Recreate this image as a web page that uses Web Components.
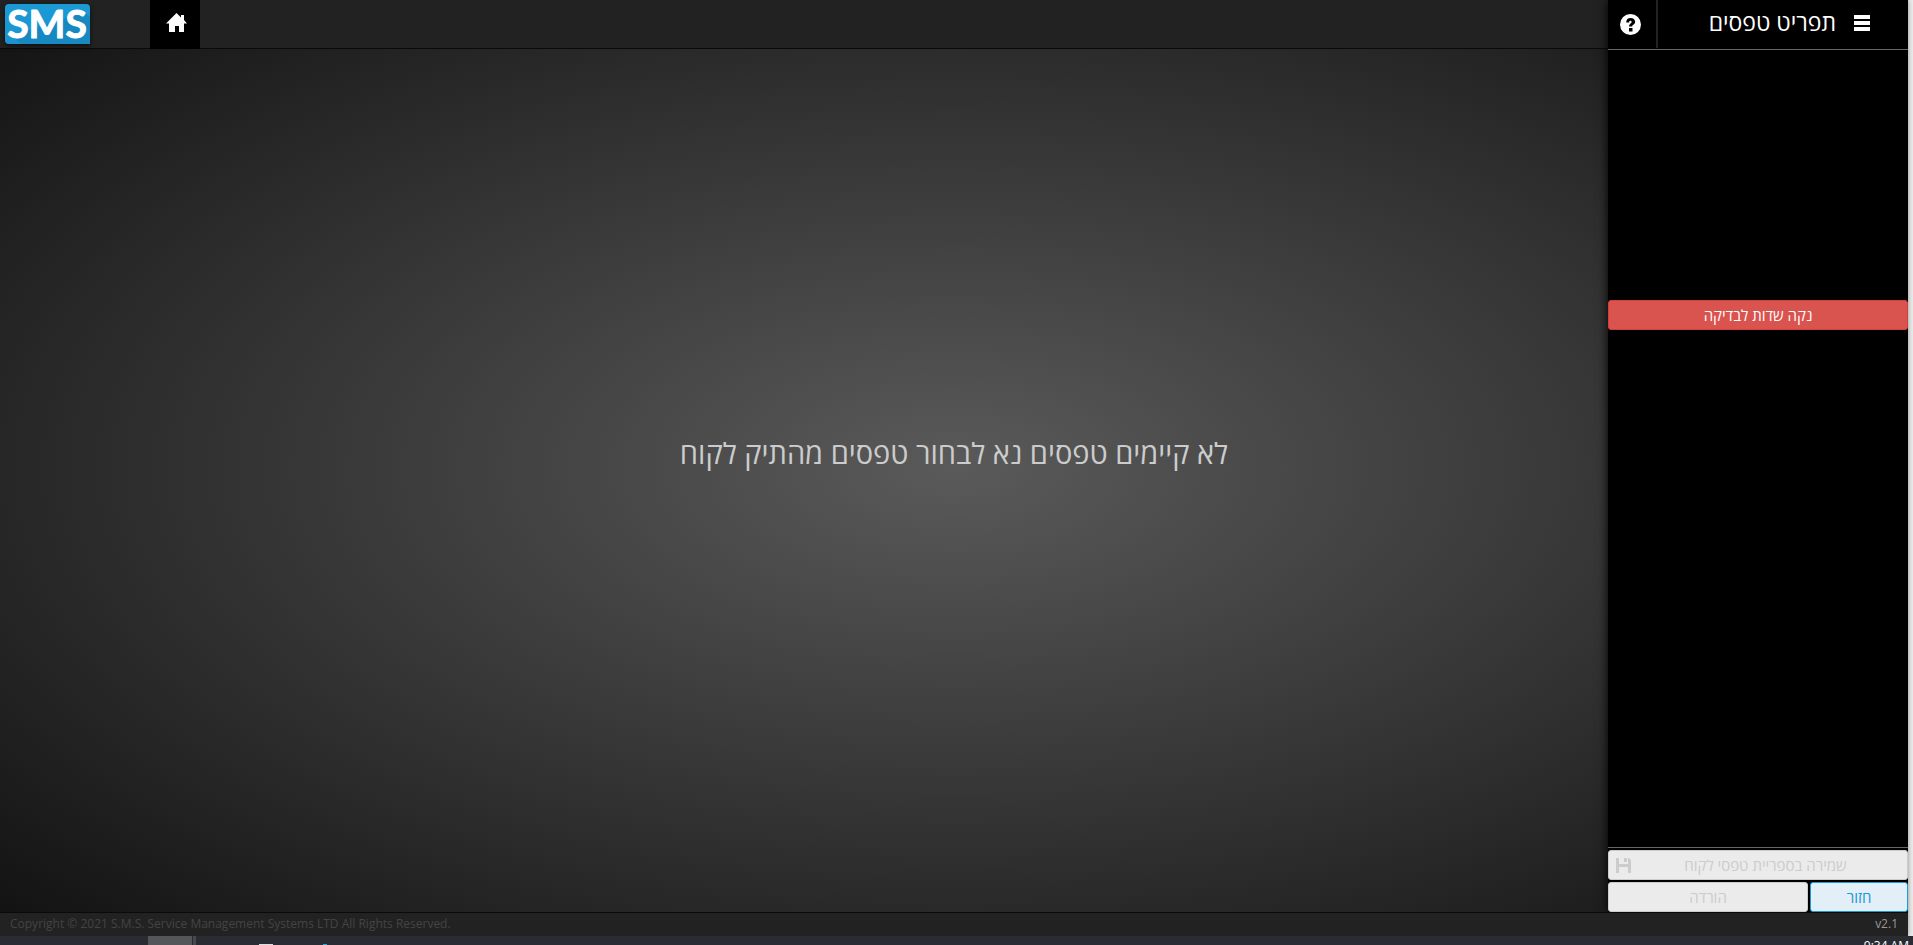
<!DOCTYPE html>
<html lang="he">
<head>
<meta charset="utf-8">
<title>SMS</title>
<style>
html, body { height: 100%; margin: 0; }
body { overflow: hidden; background: #ececec; font-family: "Open Sans", "Noto Sans", sans-serif; }
</style>
</head>
<body>
<sms-app></sms-app>
<script>
const define = (name, html, setup) => customElements.define(name, class extends HTMLElement {
  connectedCallback() {
    if (this.shadowRoot) return;
    const t = document.createElement('template');
    t.innerHTML = html;
    this.attachShadow({ mode: 'open' }).append(t.content.cloneNode(true));
    if (setup) setup(this);
  }
});

const icons = {
  home: '<path d="M10.500 0 0 10.500h3V19h6v-6h4v6h5v-8.500h3L18 7V2h-3v2.500z"/>',
  help: '<path fill-rule="evenodd" d="M10.500 0a10.500 10.500 0 1 0 0 21a10.500 10.500 0 0 0 0-21zM9 14h3.500v3.500H9zM6.200 8.500C6.200 5.400 8 4 10.600 4c2.700 0 4.500 1.400 4.500 3.800 0 2.800-2.900 2.900-2.900 4.700H9.100c0-3 2.500-2.900 2.500-4.500 0-.8-.5-1.200-1.200-1.200-.9 0-1.300.7-1.300 1.700z"/>',
  menu: '<path d="M0 0h16v4H0zM0 6h16v4H0zM0 12h16v4H0z"/>',
  save: '<path fill-rule="evenodd" d="M0 0h3v6h9V0h1l2 2v13h-3V9H3v6H0zM8 0h3v4H8z"/>'
};

define('sms-icon', '<style>:host{display:block;flex:none}svg{display:block;fill:currentColor}</style>', host => {
  const w = host.getAttribute('width'), h = host.getAttribute('height');
  host.shadowRoot.innerHTML += `<svg width="${w}" height="${h}" viewBox="0 0 ${w} ${h}" aria-hidden="true">${icons[host.getAttribute('name')]}</svg>`;
});

define('sms-logo', `
<style>
:host { display: block; width: 85px; height: 40px; box-shadow: 0 2px 5px #0009; border-radius: 4px 4px 0 4px; }
svg { display: block; }
text { font: 700 39px Lato, "Open Sans", sans-serif; fill: #fff; stroke: #fff; stroke-linejoin: round; }
</style>
<svg width="85" height="40" viewBox="0 0 85 40" role="img" aria-label="SMS">
  <defs><linearGradient id="g" x1="0" y1="0" x2="0" y2="1"><stop stop-color="#1b9ad6"/><stop offset="1" stop-color="#1a94ce"/></linearGradient></defs>
  <path d="M4 0H81a4 4 0 0 1 4 4V40H4a4 4 0 0 1-4-4V4a4 4 0 0 1 4-4z" fill="url(#g)"/>
  <path d="M6 32 17 40H85V13L80 8z" fill="#1788c0"/>
  <text x="42" y="34" text-anchor="middle">SMS</text>
</svg>`);

define('sms-topbar', `
<style>
:host { display: flex; height: 48px; background: #222; border-bottom: 1px solid #0a0a0a; }
.brand { box-sizing: border-box; width: 150px; padding: 4px 5px; }
a.home { display: flex; align-items: center; justify-content: center; box-sizing: border-box; width: 50px; height: 49px; padding: 0 0 4px 3px; background: #000; color: #fff; }
</style>
<div class="brand"><sms-logo></sms-logo></div>
<a class="home" href="#" aria-label="Home"><sms-icon name="home" width="21" height="19"></sms-icon></a>`);

define('sms-stage', `
<style>
:host { display: flex; align-items: center; justify-content: center; }
p { margin: 0; font-size: 29px; line-height: 44px; color: #ccc; direction: rtl; }
</style>
<p><slot></slot></p>`);

define('sms-button', `
<style>
:host { display: block; }
button { display: flex; align-items: center; justify-content: center; box-sizing: border-box; width: 100%; height: 30px; margin: 0; padding: 0 7px; border: 1px solid #ccc; border-radius: 3px; background: #ebebeb; color: #ccc; font: 15px/24px "Open Sans", "Noto Sans", sans-serif; direction: rtl; }
span { flex: 1; }
:host([kind=danger]) button { background: #d9534f; border-color: #d43f3a; color: #fff; }
:host([kind=primary]) button { background: #e2eff6; border-color: #1b9ad6; color: #1b9ad6; }
</style>
<button type="button"><span><slot></slot></span><slot name="icon"></slot></button>`,
host => { host.shadowRoot.querySelector('button').disabled = host.hasAttribute('disabled'); });

define('sms-sidebar', `
<style>
:host { display: flex; flex-direction: column; background: #000; color: #fff; box-shadow: 0 0 10px #000; }
header { display: flex; height: 49px; border-bottom: 1px solid #666; }
.help { display: flex; align-items: center; justify-content: center; box-sizing: border-box; width: 50px; height: 48px; padding: 0 3px 0 0; border: 0; border-right: 2px solid #222; background: none; color: #fff; }
.title { flex: 1; display: flex; align-items: center; gap: 18px; direction: rtl; padding: 0 38px 3px 0; }
h1 { margin: 0; padding-bottom: 2px; font-size: 23px; line-height: 32px; font-weight: 400; }
.body { flex: 1; padding-top: 250px; }
footer { display: grid; grid-template-columns: 200px 1fr; gap: 2px; padding: 2px 0 0; border-top: 1px solid #666; }
.wide { grid-column: 1 / -1; }
</style>
<header>
  <button class="help" type="button" aria-label="עזרה"><sms-icon name="help" width="21" height="21"></sms-icon></button>
  <div class="title"><sms-icon name="menu" width="16" height="16"></sms-icon><h1>תפריט טפסים</h1></div>
</header>
<div class="body"><sms-button kind="danger">נקה שדות לבדיקה</sms-button></div>
<footer>
  <sms-button class="wide" disabled>שמירה בספריית טפסי לקוח<sms-icon slot="icon" name="save" width="15" height="15"></sms-icon></sms-button>
  <sms-button disabled>הורדה</sms-button>
  <sms-button kind="primary">חזור</sms-button>
</footer>`);

define('sms-footer', `
<style>
:host { display: flex; justify-content: space-between; height: 23px; padding: 0 10px; background: #222; border-top: 1px solid #0a0a0a; font-size: 12px; line-height: 22px; color: #444; }
.version { color: #999; }
</style>
<slot></slot><span class="version">v2.1</span>`);

define('sms-taskbar', `
<style>
:host { display: flex; height: 9px; overflow: hidden; background: #292d33; color: #fff; }
.active { width: 44px; margin-left: 148px; background: #55565a; }
.next { width: 3px; margin-left: 1px; background: #48494d; }
.app { width: 14px; height: 1px; margin: 8px 0 0 63px; background: #ddd; }
.app.blue { width: 4px; margin-left: 50px; background: #29a9d8; }
time { margin: 2px 4px 0 auto; font: 12px/16px "Open Sans", sans-serif; white-space: nowrap; }
</style>
<span class="active"></span><span class="next"></span><span class="app"></span><span class="app blue"></span>
<time>9:34 AM</time>`);

define('sms-app', `
<style>
:host { display: flex; flex-direction: column; height: 100vh; }
.window { flex: 1; min-height: 0; display: grid; grid-template: auto 1fr auto / 1fr 300px; margin-right: 5px; background: radial-gradient(ellipse at center, #5a5a5a, #111); box-shadow: 0 0 5px #0006; overflow: hidden; }
sms-topbar { grid-area: 1 / 1 / 2 / 3; }
sms-stage { grid-area: 2 / 1 / 3 / 3; padding-bottom: 56px; }
sms-sidebar { grid-area: 1 / 2 / 3 / 3; }
sms-footer { grid-area: 3 / 1 / 4 / 3; z-index: 1; }
</style>
<div class="window">
  <sms-topbar></sms-topbar>
  <sms-stage>לא קיימים טפסים נא לבחור טפסים מהתיק לקוח</sms-stage>
  <sms-sidebar></sms-sidebar>
  <sms-footer>Copyright © 2021 S.M.S. Service Management Systems LTD All Rights Reserved.</sms-footer>
</div>
<sms-taskbar></sms-taskbar>`);
</script>
</body>
</html>
